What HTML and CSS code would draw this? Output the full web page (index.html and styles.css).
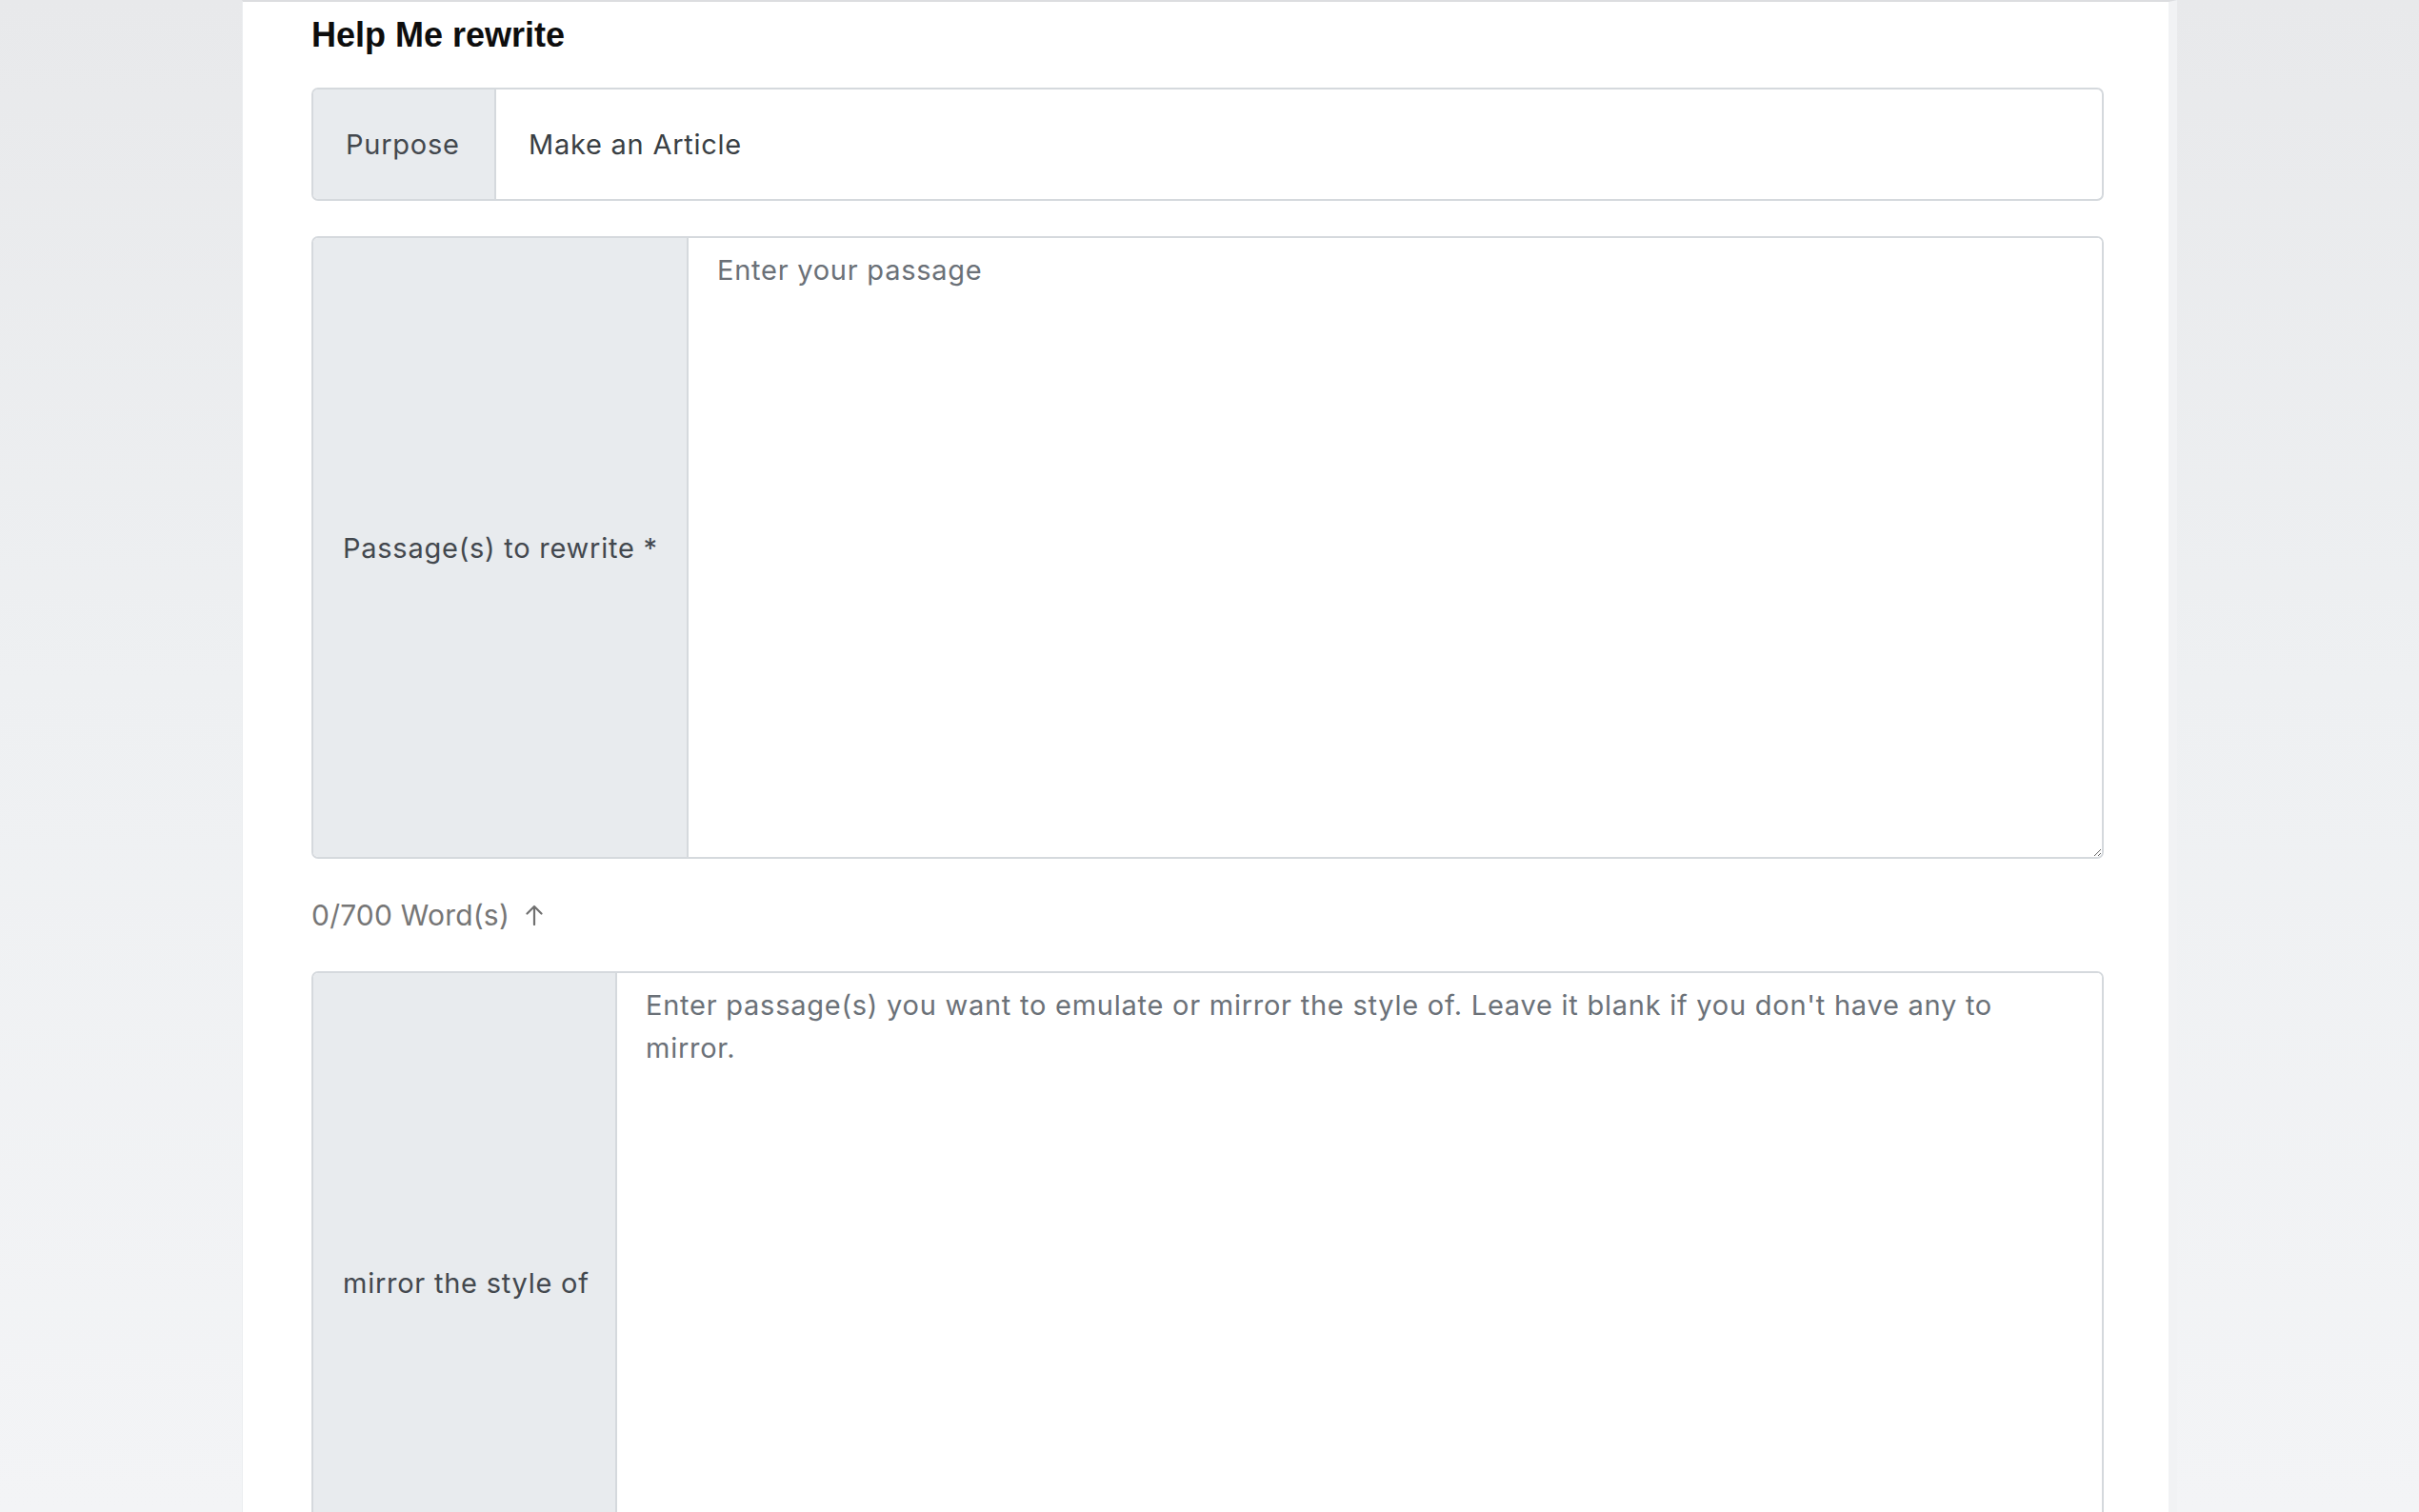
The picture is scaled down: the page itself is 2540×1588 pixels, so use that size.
FILE: index.html
```html
<!DOCTYPE html>
<html lang="en">
<head>
<meta charset="utf-8">
<title>Help Me rewrite</title>
<link rel="stylesheet" href="styles.css">
</head>
<body>
<main class="card">
  <h1 class="title">Help Me rewrite</h1>

  <div class="group group-purpose">
    <span class="addon addon-purpose">Purpose</span>
    <div class="value">Make an Article</div>
  </div>

  <div class="group group-area">
    <label class="addon addon-passage" for="passage">Passage(s) to rewrite *</label>
    <textarea id="passage" class="area" placeholder="Enter your passage"></textarea>
  </div>

  <div class="count">0/700 Word(s)
    <svg class="arrow" viewBox="0 0 20 22" width="20" height="22" aria-hidden="true">
      <path d="M10 21V2M2.5 9.5L10 2l7.5 7.5" fill="none" stroke="currentColor" stroke-width="2.2" stroke-linecap="round" stroke-linejoin="round"/>
    </svg>
  </div>

  <div class="group group-area">
    <label class="addon addon-mirror" for="mirror">mirror the style of</label>
    <textarea id="mirror" class="area" placeholder="Enter passage(s) you want to emulate or mirror the style of. Leave it blank if you don't have any to mirror."></textarea>
  </div>
</main>
</body>
</html>
```

FILE: styles.css
```css
* { box-sizing: border-box; }

html, body {
  margin: 0;
  height: 100%;
}

body {
  background: linear-gradient(180deg, #e8e9eb 0%, #eef0f2 45%, #f3f4f6 100%);
  font-family: Inter, "Noto Sans", sans-serif;
  overflow: hidden;
}

.card {
  width: 2032px;
  min-height: 100%;
  margin: 0 auto;
  background: #ffffff;
  border-top: 2px solid #dcdde0;
  border-left: 1px solid #eceef0;
  border-right: 9px solid #f1f2f4;
  padding: 17px 68px 0 72px;
}

.title {
  margin: 0 0 37px;
  font-family: "Liberation Sans", Arial, sans-serif;
  font-size: 36px;
  line-height: 36px;
  font-weight: 700;
  color: #0d0d0d;
}

.group {
  display: flex;
  border: 2px solid #d5d9dd;
  border-radius: 7px;
  overflow: hidden;
  color: #43484e;
  font-size: 29px;
  letter-spacing: 0.75px;
}

.group-purpose {
  height: 119px;
  margin-bottom: 37px;
}

.group-area {
  height: 654px;
}

.addon {
  display: flex;
  align-items: center;
  background: #e8ebee;
  border-right: 2px solid #d5d9dd;
  padding: 0 31px;
  white-space: nowrap;
  flex: none;
}

.addon-purpose { width: 192px; padding: 0 34px; }
.addon-passage { width: 394px; }
.addon-mirror { width: 319px; }

.value {
  display: flex;
  align-items: center;
  padding: 0 34px;
  flex: 1;
  color: #3a3f44;
}

.area {
  flex: 1;
  border: 0;
  margin: 0;
  padding: 11px 30px;
  font-family: inherit;
  font-size: 29px;
  letter-spacing: 0.75px;
  line-height: 45px;
  color: #3a3f44;
  background: #ffffff;
  resize: vertical;
  outline: none;
}

.area::placeholder {
  color: #6b7178;
  opacity: 1;
}

.count {
  display: flex;
  align-items: center;
  gap: 16px;
  height: 118px;
  font-size: 30px;
  letter-spacing: 0.2px;
  color: #767676;
}

.arrow {
  width: 20px;
  height: 22px;
  color: #707070;
}
```
